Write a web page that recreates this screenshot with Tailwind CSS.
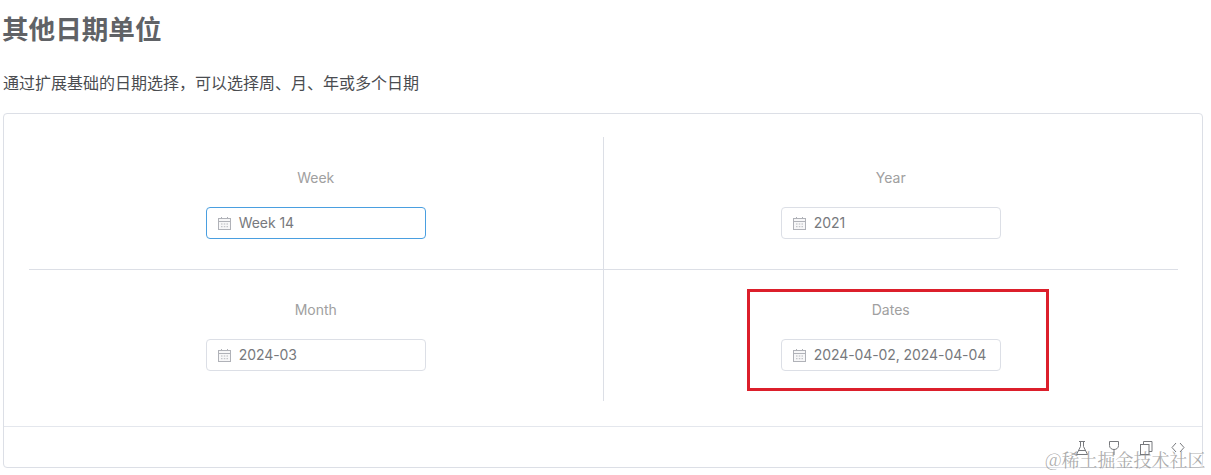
<!DOCTYPE html>
<html lang="zh">
<head>
<meta charset="utf-8">
<script src="https://cdn.jsdelivr.net/npm/@tailwindcss/browser@4"></script>
</head>
<body class="bg-white overflow-hidden font-['Inter','Noto_Sans_CJK_SC',sans-serif]">
<div class="relative w-[1211px] h-[475px] overflow-hidden pl-[2px]">
  <h3 class="h-[60px] pt-[12px] text-[26.6px] leading-[34px] font-bold text-[#606266]">其他日期单位</h3>
  <p class="mt-[11px] pl-[1px] h-[29px] text-[16px] leading-[24px] text-[#4a4c50]">通过扩展基础的日期选择，可以选择周、月、年或多个日期</p>
  <div class="ml-[1px] mt-[13px] w-[1200px] h-[355px] border border-[#dcdfe6] rounded-[4px] flex flex-col">
    <div class="h-[313px] pt-[23px] px-[25px] border-b border-[#e4e7ed]">
      <div class="grid grid-cols-2 w-[1149px] h-[264px]">
        <div class="h-[133px] border-r border-b border-[#dcdfe6] flex flex-col items-center pt-[33px]">
          <span class="h-[16px] text-[14px] leading-[16px] text-[#a0a0a0]">Week</span>
          <div class="mt-[21px] w-[220px] h-[32px] rounded-[4px] border border-[#4a9fe0] flex items-center pl-[10px] gap-[7px]">
            <svg class="w-[15px] h-[15px] shrink-0" viewBox="0 0 15 15" fill="none" stroke="#b0b2b8"><rect x="1.500" y="2.500" width="12" height="11" fill="#f7f7f8"/><path d="M1.500 5.500h12M4.500 1v2M10.500 1v2"/><path d="M4 8h1.500M6.800 8h1.500M9.500 8h1.500M4 10.700h1.500M6.800 10.700h1.500M9.500 10.700h1.500" stroke-width="0.9"/></svg>
            <span class="text-[14px] tracking-[-0.08px] leading-[20px] text-[#77797d]">Week 14</span>
          </div>
        </div>
        <div class="h-[133px] border-b border-[#dcdfe6] flex flex-col items-center pt-[33px]">
          <span class="h-[16px] text-[14px] leading-[16px] text-[#a0a0a0]">Year</span>
          <div class="mt-[21px] w-[220px] h-[32px] rounded-[4px] border border-[#dcdfe6] flex items-center pl-[10px] gap-[7px]">
            <svg class="w-[15px] h-[15px] shrink-0" viewBox="0 0 15 15" fill="none" stroke="#b0b2b8"><rect x="1.500" y="2.500" width="12" height="11" fill="#f7f7f8"/><path d="M1.500 5.500h12M4.500 1v2M10.500 1v2"/><path d="M4 8h1.500M6.800 8h1.500M9.500 8h1.500M4 10.700h1.500M6.800 10.700h1.500M9.500 10.700h1.500" stroke-width="0.9"/></svg>
            <span class="text-[14px] tracking-[-0.08px] leading-[20px] text-[#77797d]">2021</span>
          </div>
        </div>
        <div class="h-[131px] border-r border-[#dcdfe6] flex flex-col items-center pt-[32px]">
          <span class="h-[16px] text-[14px] leading-[16px] text-[#a0a0a0]">Month</span>
          <div class="mt-[21px] w-[220px] h-[32px] rounded-[4px] border border-[#dcdfe6] flex items-center pl-[10px] gap-[7px]">
            <svg class="w-[15px] h-[15px] shrink-0" viewBox="0 0 15 15" fill="none" stroke="#b0b2b8"><rect x="1.500" y="2.500" width="12" height="11" fill="#f7f7f8"/><path d="M1.500 5.500h12M4.500 1v2M10.500 1v2"/><path d="M4 8h1.500M6.800 8h1.500M9.500 8h1.500M4 10.700h1.500M6.800 10.700h1.500M9.500 10.700h1.500" stroke-width="0.9"/></svg>
            <span class="text-[14px] tracking-[-0.08px] leading-[20px] text-[#77797d]">2024-03</span>
          </div>
        </div>
        <div class="h-[131px] flex flex-col items-center pt-[32px]">
          <span class="h-[16px] text-[14px] leading-[16px] text-[#a0a0a0]">Dates</span>
          <div class="mt-[21px] w-[220px] h-[32px] rounded-[4px] border border-[#dcdfe6] flex items-center pl-[10px] gap-[7px]">
            <svg class="w-[15px] h-[15px] shrink-0" viewBox="0 0 15 15" fill="none" stroke="#b0b2b8"><rect x="1.500" y="2.500" width="12" height="11" fill="#f7f7f8"/><path d="M1.500 5.500h12M4.500 1v2M10.500 1v2"/><path d="M4 8h1.500M6.800 8h1.500M9.500 8h1.500M4 10.700h1.500M6.800 10.700h1.500M9.500 10.700h1.500" stroke-width="0.9"/></svg>
            <span class="text-[14px] tracking-[-0.08px] leading-[20px] text-[#77797d] whitespace-nowrap">2024-04-02, 2024-04-04</span>
          </div>
        </div>
      </div>
    </div>
    <div class="flex-1 flex justify-end items-start gap-[16px] pt-[13px] pr-[16px]">
      <svg class="w-[16px] h-[16px]" viewBox="0 0 16 16" fill="none" stroke="#77797d"><path d="M5 1.500h6M6.500 1.500v5L2.500 14.500h11L9.500 6.500v-5M4.500 10.500h7"/></svg>
      <svg class="w-[16px] h-[16px]" viewBox="0 0 16 16" fill="none" stroke="#77797d"><path d="M3.500 1.500h9v4c0 2.500-2 4-4.500 4s-4.500-1.500-4.500-4zM8 9.500v5.500"/></svg>
      <svg class="w-[16px] h-[16px]" viewBox="0 0 16 16" fill="none" stroke="#77797d"><rect x="2.500" y="4.500" width="8.500" height="10"/><path d="M5.500 4.500V1.500h8.500v10h-3"/></svg>
      <svg class="w-[16px] h-[16px]" viewBox="0 0 16 16" fill="none" stroke="#77797d"><path d="M6 3L2 7.500 6 12M10 3l4 4.500-4 4.500"/></svg>
    </div>
  </div>
  <div class="absolute left-[747px] top-[289px] w-[302px] h-[102px] border-[3px] border-[#dc1f2b]"></div>
  <div class="absolute left-[1045px] top-[447px] text-[18px] leading-[24px] font-['Noto_Serif_CJK_SC','Noto_Sans_CJK_SC',serif] text-[#888]/70 whitespace-nowrap">@稀土掘金技术社区</div>
</div>
</body>
</html>
